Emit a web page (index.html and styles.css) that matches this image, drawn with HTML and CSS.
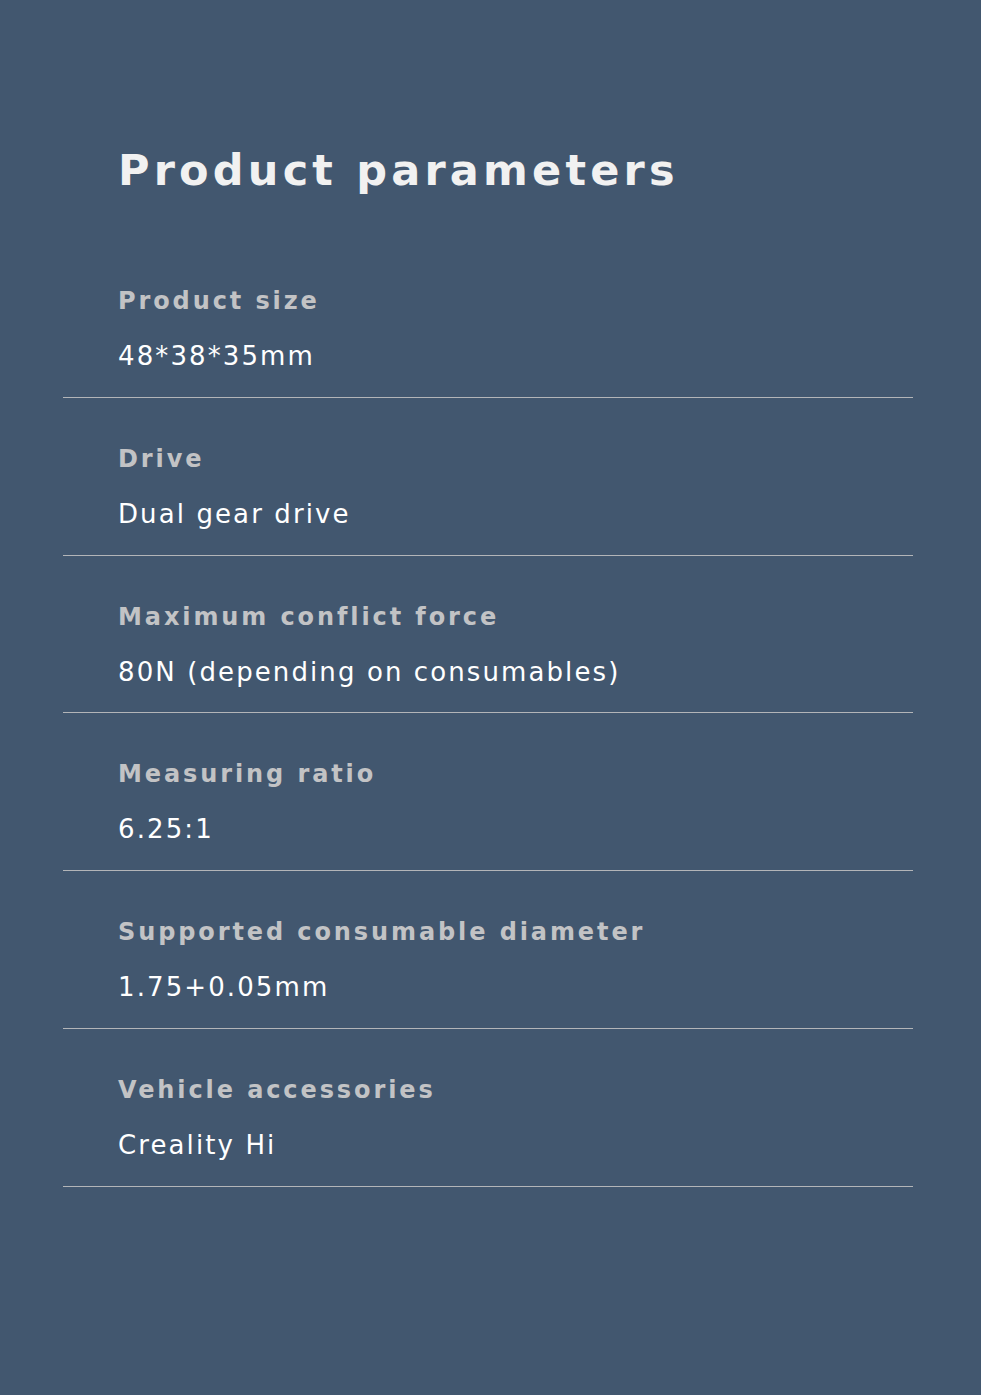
FILE: index.html
```html
<!DOCTYPE html>
<html lang="en">
<head>
<meta charset="utf-8">
<title>Product parameters</title>
<link rel="stylesheet" href="styles.css">
</head>
<body>
<main class="page">
  <h1 class="title">Product parameters</h1>
  <ul class="params">
    <li class="param">
      <div class="param-label">Product size</div>
      <div class="param-value">48*38*35mm</div>
    </li>
    <li class="param">
      <div class="param-label">Drive</div>
      <div class="param-value">Dual gear drive</div>
    </li>
    <li class="param">
      <div class="param-label">Maximum conflict force</div>
      <div class="param-value">80N (depending on consumables)</div>
    </li>
    <li class="param">
      <div class="param-label">Measuring ratio</div>
      <div class="param-value">6.25:1</div>
    </li>
    <li class="param">
      <div class="param-label">Supported consumable diameter</div>
      <div class="param-value">1.75+0.05mm</div>
    </li>
    <li class="param">
      <div class="param-label">Vehicle accessories</div>
      <div class="param-value">Creality Hi</div>
    </li>
  </ul>
</main>
</body>
</html>
```

FILE: styles.css
```css
html, body {
  margin: 0;
  padding: 0;
  background: #42576f;
}

body {
  font-family: "DejaVu Sans", "Liberation Sans", sans-serif;
  min-height: 1395px;
}

.page {
  padding: 140px 68px 0 63px;
}

.title {
  margin: 0 0 0 55px;
  font-size: 43px;
  line-height: 60px;
  font-weight: 700;
  color: #f1f1f1;
  letter-spacing: 4.2px;
}

.params {
  list-style: none;
  margin: 43px 0 0 0;
  padding: 0;
  width: 850px;
}

.param {
  padding: 46px 0 24.8px 55px;
  border-bottom: 1px solid #b3b5b8;
}

.param:first-child {
  padding-top: 43px;
}

.param-label {
  font-size: 24px;
  line-height: 30px;
  font-weight: 700;
  color: #c2c3c5;
  letter-spacing: 2.9px;
}

.param-value {
  margin-top: 24px;
  font-size: 26px;
  line-height: 32px;
  color: #ffffff;
  letter-spacing: 2.1px;
}
```
